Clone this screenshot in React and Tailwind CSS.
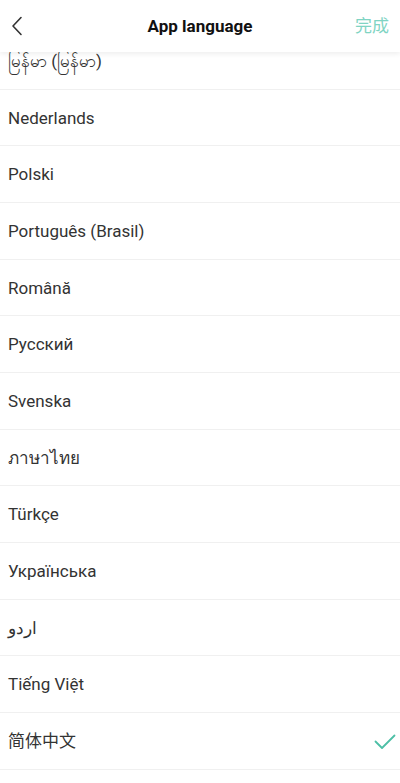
import React from 'react'

const languages = [
  'မြန်မာ (မြန်မာ)',
  'Nederlands',
  'Polski',
  'Português (Brasil)',
  'Română',
  'Русский',
  'Svenska',
  'ภาษาไทย',
  'Türkçe',
  'Українська',
  'اردو',
  'Tiếng Việt',
  '简体中文',
]

const font = { fontFamily: 'Roboto, "Noto Sans", "Noto Sans CJK SC", sans-serif' }

const App = () => {
  const selected = '简体中文'

  return (
    <div className="w-[400px] h-[783px] bg-white overflow-hidden" style={font}>
      <div className="relative z-10 h-[52px] bg-white grid grid-cols-[56px_1fr_56px] items-center shadow-[0_2px_5px_rgba(0,0,0,0.07)]">
        <button className="h-[52px] flex items-center pl-[11px]">
          <svg width="12" height="20" viewBox="0 0 12 20" fill="none">
            <path d="M10 1.5 L2 10 L10 18.5" stroke="#333" strokeWidth="1.6" strokeLinecap="round" strokeLinejoin="round" />
          </svg>
        </button>
        <h1 className="text-[17px] font-bold text-[#111] text-center pt-[1px]">App language</h1>
        <button className="text-[17px] text-[#7fd4c3] text-right pr-[11px] pt-[1px]">完成</button>
      </div>

      <ul className="-mt-[19px]">
        {languages.map((lang) => (
          <li
            key={lang}
            className="h-[56.67px] flex items-center justify-between pl-[8px] pr-[4px] pt-[2px] border-b border-[#f0f0f0]"
          >
            <span className="text-[17px] text-[#333]">{lang}</span>
            {lang === selected && (
              <svg width="22" height="16" viewBox="0 0 22 16" fill="none">
                <path d="M1.5 7.5 L8 14 L20.5 1.5" stroke="#4dbfa6" strokeWidth="1.8" strokeLinecap="round" strokeLinejoin="round" />
              </svg>
            )}
          </li>
        ))}
      </ul>
    </div>
  )
}

export default App
